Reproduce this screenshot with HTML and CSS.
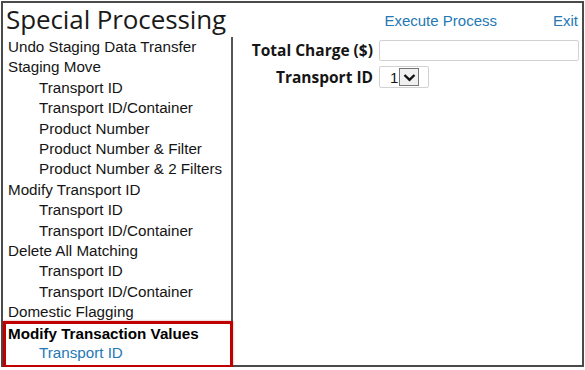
FILE: index.html
```html
<!DOCTYPE html>
<html lang="en">
<head>
    <meta charset="UTF-8">
    <title>Special Processing</title>
    <link rel="stylesheet" href="styles.css">
</head>
<body>

<div class="frame">
    <div class="header">
        <h1 class="title">Special Processing</h1>
        <div class="links">
            <a href="#" class="link">Execute Process</a>
            <a href="#" class="link exit">Exit</a>
        </div>
    </div>
    <div class="content">
        <div class="sidebar">
            <ul class="menu">
                <li>Undo Staging Data Transfer</li>
                <li>Staging Move</li>
                <li class="sub">Transport ID</li>
                <li class="sub">Transport ID/Container</li>
                <li class="sub">Product Number</li>
                <li class="sub">Product Number &amp; Filter</li>
                <li class="sub">Product Number &amp; 2 Filters</li>
                <li>Modify Transport ID</li>
                <li class="sub">Transport ID</li>
                <li class="sub">Transport ID/Container</li>
                <li>Delete All Matching</li>
                <li class="sub">Transport ID</li>
                <li class="sub">Transport ID/Container</li>
                <li>Domestic Flagging</li>
            </ul>
            <ul class="menu highlight">
                <li class="active">Modify Transaction Values</li>
                <li class="sub selected">Transport ID</li>
            </ul>
        </div>
        <div class="form">
            <div class="row">
                <label class="label">Total Charge ($)</label>
                <input type="text" class="field">
            </div>
            <div class="row">
                <label class="label">Transport ID</label>
                <div class="select">
                    <span class="value">1</span>
                    <span class="arrow">
                        <svg width="13" height="9" viewBox="0 0 13 9"><path d="M1.5 2 L6.5 6.8 L11.5 2" fill="none" stroke="#111" stroke-width="2.4"/></svg>
                    </span>
                </div>
            </div>
        </div>
    </div>
</div>

</body>
</html>
```

FILE: styles.css
```css
body {
    margin: 0;
    background: #fff;
    font-family: Arial, "Liberation Sans", sans-serif;
    color: #151515;
}
.frame {
    margin: 1px 0 0 1px;
    width: 579px;
    height: 362px;
    border: 2px solid #4a4a4a;
    display: flex;
    flex-direction: column;
}
.header {
    display: flex;
    justify-content: space-between;
    align-items: flex-start;
    height: 34px;
}
.title {
    margin: 0 0 0 3px;
    font-family: "Open Sans", sans-serif;
    font-weight: 400;
    font-size: 26px;
    line-height: 33px;
    letter-spacing: -0.1px;
    color: #1a1a1a;
}
.links {
    display: flex;
    gap: 56px;
    padding: 9px 4px 0 0;
    font-size: 15px;
}
.link {
    color: #2478b5;
    text-decoration: none;
}
.content {
    flex: 1;
    display: flex;
}
.sidebar {
    width: 230px;
    display: flex;
    flex-direction: column;
}
.menu {
    list-style: none;
    margin: 0;
    padding: 0 0 0 5px;
    font-size: 15.2px;
    line-height: 20.4px;
    border-right: 2px solid #555;
}
.menu li.sub {
    padding-left: 31px;
}
.highlight {
    flex: 1;
    border: 3px solid #c00000;
    margin: -2px 0 -3px 0;
    padding: 0 0 0 2px;
    line-height: 19.5px;
    box-shadow: 0 0 2px rgba(150, 0, 0, 0.4);
}
.active {
    font-weight: bold;
    color: #000;
}
.selected {
    color: #2478b5;
}
.form {
    flex: 1;
    padding: 2px 0 0 0;
}
.row {
    display: flex;
    align-items: center;
    margin-bottom: 5px;
}
.label {
    width: 140px;
    text-align: right;
    padding-right: 6px;
    font-family: "Open Sans", sans-serif;
    font-weight: bold;
    font-size: 15.5px;
    color: #151515;
}
.field {
    width: 196px;
    height: 17px;
    margin: 0;
    padding: 1px;
    border: 1px solid #d2d2d2;
    border-radius: 2px;
}
.select {
    display: flex;
    align-items: center;
    width: 50px;
    height: 22px;
    border: 1px solid #d2d2d2;
    border-radius: 2px;
    box-sizing: border-box;
    font-size: 15px;
}
.value {
    padding-left: 10px;
    width: 9px;
}
.arrow {
    display: flex;
    align-items: center;
    justify-content: center;
    width: 20px;
    height: 18px;
    border: 1px solid #777;
    background: #f0f0f0;
    box-sizing: border-box;
}
```
